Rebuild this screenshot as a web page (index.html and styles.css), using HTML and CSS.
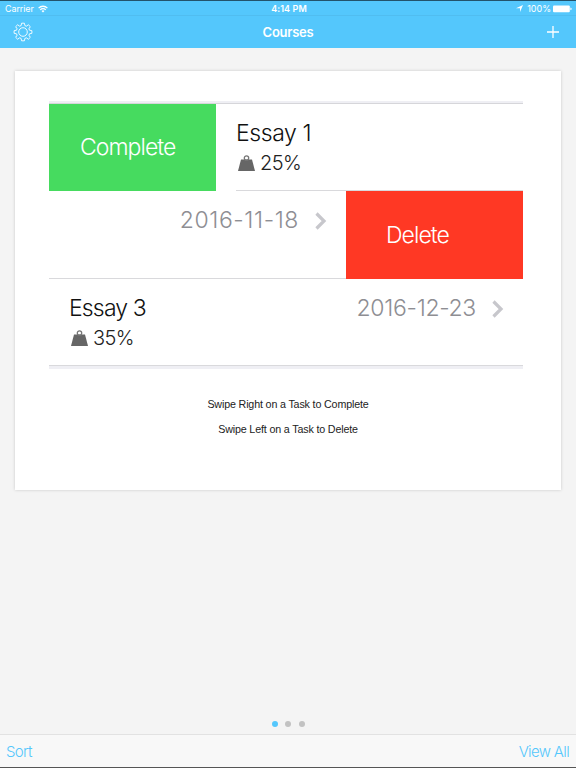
FILE: index.html
```html
<!DOCTYPE html>
<html lang="en">
<head>
    <meta charset="UTF-8">
    <meta name="viewport" content="width=device-width, initial-scale=1.0">
    <title>Courses</title>
    <link rel="stylesheet" href="styles.css">
</head>
<body>
    <header class="header">
        <div class="status-bar">
            <div class="status-left">
                <span class="carrier">Carrier</span>
                <svg class="wifi" width="10" height="8" viewBox="0 0 10 8" fill="none" stroke="#fff" stroke-width="1.3">
                    <path d="M0.6 3.1a6.2 6.2 0 0 1 8.8 0M2.2 4.9a4 4 0 0 1 5.6 0"/>
                    <path d="M5 7.6L3.5 6a2.2 2.2 0 0 1 3 0z" fill="#fff" stroke="none"/>
                </svg>
            </div>
            <span class="time">4:14 PM</span>
            <div class="status-right">
                <svg class="location" width="7" height="7" viewBox="0 0 7 7"><path d="M7 0L4 7V3.3H0z" fill="#fff"/></svg>
                <span class="percent">100%</span>
                <svg width="19" height="8" viewBox="0 0 19 8" fill="#fff"><rect x="0" y="0.5" width="16.8" height="6.8" rx="1"/><path d="M17.4 2.6q1.3 0.3 1.3 1.3t-1.3 1.3z"/></svg>
            </div>
        </div>
        <nav class="nav-bar">
            <svg class="gear" width="20" height="20" viewBox="0 0 20 20" fill="none" stroke="#fff" stroke-width="0.9" stroke-linejoin="round">
                <path d="M8.6 1.2h2.8l.5 2.4 1.4.6 2.1-1.4 1.9 1.9-1.4 2.1.6 1.4 2.4.5v2.6l-2.4.5-.6 1.4 1.4 2.1-1.9 1.9-2.1-1.4-1.4.6-.5 2.4H8.6l-.5-2.4-1.4-.6-2.1 1.4-1.9-1.9 1.4-2.1-.6-1.4-2.4-.5V8.7l2.4-.5.6-1.4-1.4-2.1 1.9-1.9 2.1 1.4 1.4-.6z"/>
                <circle cx="10" cy="10" r="4.3"/>
            </svg>
            <h1 class="title">Courses</h1>
            <svg class="plus" width="12" height="12" viewBox="0 0 12 12" stroke="#fff" stroke-width="1.3"><path d="M6 0v12M0 6h12"/></svg>
        </nav>
    </header>

    <main class="page">
        <section class="card">
            <div class="task-list">
                <div class="task">
                    <div class="action complete"><span>Complete</span></div>
                    <div class="task-body short-line">
                        <div class="info">
                            <div class="name name-wide">Essay 1</div>
                            <div class="weight">
                                <svg width="17" height="16" viewBox="0 0 17 16"><path d="M3 4.5h11L17 16H0z" fill="#666"/><circle cx="8.5" cy="3" r="2.2" fill="none" stroke="#777" stroke-width="1.3"/></svg>
                                <span>25%</span>
                            </div>
                        </div>
                    </div>
                </div>
                <div class="task middle">
                    <div class="task-body">
                        <div class="due">
                            <span class="date date-wide">2016-11-18</span>
                            <svg class="chevron" width="12" height="18" viewBox="0 0 12 18" fill="none" stroke="#c7c7cc" stroke-width="3.2"><path d="M1.5 1.5L9 9L1.5 16.5"/></svg>
                        </div>
                    </div>
                    <div class="action delete"><span>Delete</span></div>
                </div>
                <div class="task">
                    <div class="task-body last">
                        <div class="info">
                            <div class="name">Essay 3</div>
                            <div class="weight">
                                <svg width="17" height="16" viewBox="0 0 17 16"><path d="M3 4.5h11L17 16H0z" fill="#666"/><circle cx="8.5" cy="3" r="2.2" fill="none" stroke="#777" stroke-width="1.3"/></svg>
                                <span>35%</span>
                            </div>
                        </div>
                        <div class="due">
                            <span class="date">2016-12-23</span>
                            <svg class="chevron" width="12" height="18" viewBox="0 0 12 18" fill="none" stroke="#c7c7cc" stroke-width="3.2"><path d="M1.5 1.5L9 9L1.5 16.5"/></svg>
                        </div>
                    </div>
                </div>
            </div>
            <div class="hints">
                <p class="hint hint-right">Swipe Right on a Task to Complete</p>
                <p class="hint hint-left">Swipe Left on a Task to Delete</p>
            </div>
        </section>
        <div class="dots">
            <span class="dot active"></span>
            <span class="dot"></span>
            <span class="dot"></span>
        </div>
    </main>

    <footer class="toolbar">
        <a class="sort">Sort</a>
        <a class="view-all">View All</a>
    </footer>
</body>
</html>
```
FILE: styles.css
```css
* {
    box-sizing: border-box;
}
body {
    margin: 0;
    height: 768px;
    display: flex;
    flex-direction: column;
    font-family: Inter, "Liberation Sans", sans-serif;
    background-color: #f4f4f4;
    overflow: hidden;
}
svg {
    display: block;
    flex: none;
}
.header {
    height: 48px;
    background-color: #54c7fc;
    border-top: 1px solid #23536b;
    color: #fff;
}
.status-bar {
    height: 15px;
    display: grid;
    grid-template-columns: 1fr auto 1fr;
    align-items: center;
    padding: 0 4px 0 5px;
    font-size: 9px;
    line-height: 15px;
    border-bottom: 1px solid #50bdf0;
}
.status-left,
.status-right {
    display: flex;
    align-items: center;
}
.status-left {
    gap: 4px;
}
.carrier {
    letter-spacing: -0.1px;
}
.status-right {
    justify-content: flex-end;
    gap: 2px;
}
.location {
    margin-right: 2px;
}
.time {
    margin-left: 1px;
    font-weight: 600;
    letter-spacing: 0.1px;
}
.nav-bar {
    height: 32px;
    display: grid;
    grid-template-columns: 1fr auto 1fr;
    align-items: center;
    padding: 0 17px 0 13px;
}
.title {
    margin: 0 0 0 4px;
    font-size: 13px;
    font-weight: 600;
    letter-spacing: -0.25px;
}
.plus {
    justify-self: end;
}
.page {
    flex: 1;
    display: flex;
    flex-direction: column;
    justify-content: space-between;
    padding: 23px 15px 7px;
}
.card {
    height: 419px;
    padding: 30px 38px 0 34px;
    background-color: #fff;
    box-shadow: 0 0 3px rgba(0, 0, 0, 0.18);
}
.task-list {
    border-top: 2px solid #efeff4;
    border-bottom: 3px solid #efeff4;
}
.task-list::before {
    content: "";
    display: block;
    height: 1px;
    background-color: #d6d6da;
}
.task {
    display: flex;
    height: 87px;
}
.task.middle {
    height: 88px;
}
.task-body {
    flex: 1;
    display: flex;
    justify-content: space-between;
    border-bottom: 1px solid #d9d9dc;
}
.task-body.short-line {
    margin-left: 20px;
}
.task-body.last {
    padding-left: 20px;
}
.action {
    display: flex;
    align-items: center;
    color: #fff;
    font-size: 23px;
    font-weight: 300;
    letter-spacing: -0.95px;
}
.complete {
    width: 167px;
    padding-left: 31px;
    background-color: #46db5f;
}
.complete span {
    margin-top: -2px;
}
.delete {
    width: 177px;
    padding-left: 40px;
    background-color: #ff3824;
}
.name {
    margin-top: 15px;
    font-size: 23px;
    line-height: 28px;
    font-weight: 300;
    letter-spacing: -0.85px;
    color: #111;
}
.name-wide {
    letter-spacing: -0.4px;
}
.weight {
    display: flex;
    align-items: center;
    gap: 5px;
    margin-top: 3px;
    padding-left: 2px;
    font-size: 20px;
    line-height: 26px;
    font-weight: 300;
    letter-spacing: -0.6px;
    color: #222;
}
.due {
    display: flex;
    gap: 16px;
    height: 30px;
    margin: 15px 19px 0 auto;
    align-items: center;
    font-size: 23px;
    line-height: 28px;
    font-weight: 300;
    color: #8e8e93;
}
.date {
    margin-top: -2px;
    letter-spacing: -0.3px;
}
.date-wide {
    letter-spacing: 0.6px;
}
.hints {
    padding: 27px 0 0 4px;
    text-align: center;
}
.hint {
    margin: 0 0 9px;
    font-family: "Liberation Sans", Arial, sans-serif;
    font-size: 10.7px;
    line-height: 16px;
    letter-spacing: -0.15px;
    color: #222;
}
.dots {
    display: flex;
    justify-content: center;
    gap: 7.5px;
}
.dot {
    width: 6px;
    height: 6px;
    border-radius: 50%;
    background-color: #c2c2c2;
}
.dot.active {
    background-color: #54c7fc;
}
.toolbar {
    height: 34px;
    display: flex;
    justify-content: space-between;
    align-items: center;
    padding: 0 7px 0 6px;
    background-color: #f8f8f8;
    border-top: 1px solid #e2e2e2;
    border-bottom: 1px solid #555;
    font-size: 15px;
    font-weight: 300;
    letter-spacing: -0.65px;
    color: #54c7fc;
}
```
